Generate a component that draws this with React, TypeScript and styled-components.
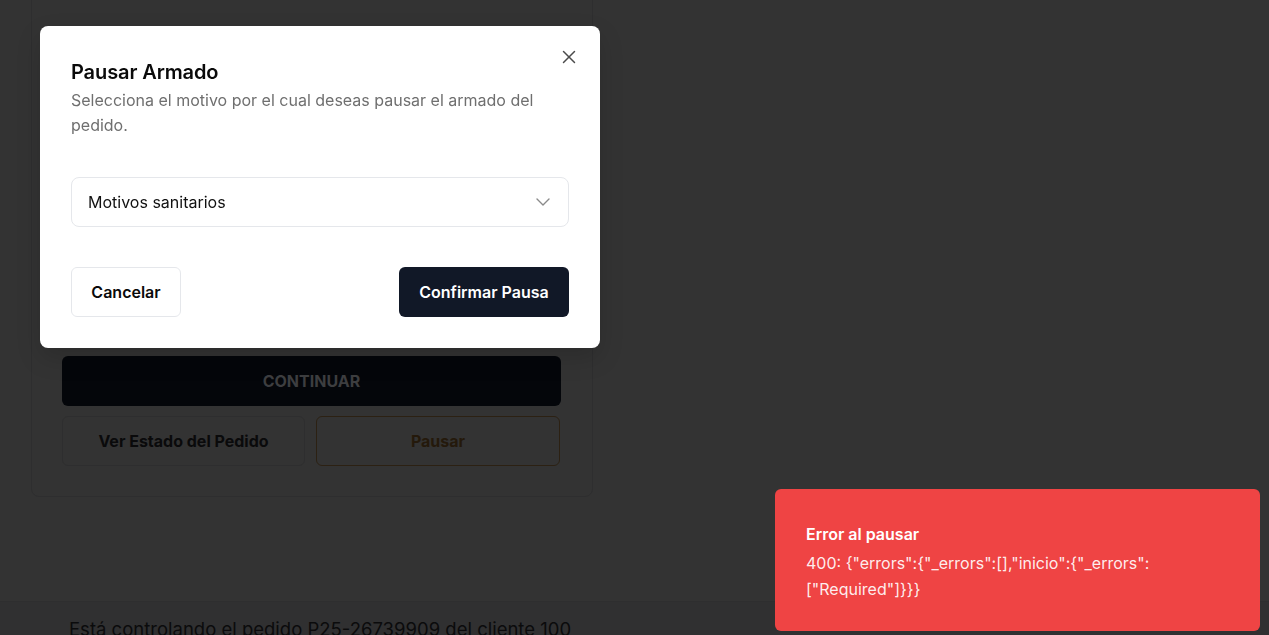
import * as React from 'react';
import styled, { createGlobalStyle } from 'styled-components';
import { X, ChevronDown } from 'lucide-react';

const GlobalStyle = createGlobalStyle`
  html, body {
    margin: 0;
    padding: 0;
    background: #333333;
    height: 100%;
    overflow: hidden;
  }
  body {
    font-family: Inter, "Noto Sans", sans-serif;
    -webkit-font-smoothing: antialiased;
  }
  * {
    box-sizing: border-box;
  }
`;

const orderNumber = 'P25-26739909';
const clientNumber = '100';

const App: React.FC = () => {
  return (
    <>
      <GlobalStyle />
      <Page>
        <Main>
          <OrderCard>
            <CardBody />
            <Actions>
              <ContinueButton disabled>CONTINUAR</ContinueButton>
              <ActionRow>
                <OutlineButton>Ver Estado del Pedido</OutlineButton>
                <PauseButton>Pausar</PauseButton>
              </ActionRow>
            </Actions>
          </OrderCard>
        </Main>
        <StatusBar>
          Está controlando el pedido {orderNumber} del cliente {clientNumber}
        </StatusBar>
      </Page>

      <Dialog role="dialog" aria-labelledby="pause-title">
        <CloseButton aria-label="Cerrar">
          <X size={22} strokeWidth={1.6} />
        </CloseButton>
        <DialogHeader>
          <DialogTitle id="pause-title">Pausar Armado</DialogTitle>
          <DialogDescription>
            Selecciona el motivo por el cual deseas pausar el armado del pedido.
          </DialogDescription>
        </DialogHeader>
        <SelectTrigger>
          <span>Motivos sanitarios</span>
          <ChevronDown size={24} strokeWidth={1.4} />
        </SelectTrigger>
        <DialogFooter>
          <SecondaryButton>Cancelar</SecondaryButton>
          <PrimaryButton>Confirmar Pausa</PrimaryButton>
        </DialogFooter>
      </Dialog>

      <Toast role="alert">
        <ToastTitle>Error al pausar</ToastTitle>
        <ToastMessage>
          400: {'{"errors":{"_errors":[],"inicio":{"_errors":'}
          <br />
          {'["Required"]}}}'}
        </ToastMessage>
      </Toast>
    </>
  );
};

const Page = styled.div`
  display: flex;
  flex-direction: column;
  height: 635px;
`;

const Main = styled.div`
  flex: 1;
  padding: 0 0 0 31px;
`;

const OrderCard = styled.div`
  width: 562px;
  margin-top: -20px;
  border: 1px solid #2e2e2f;
  border-radius: 8px;
  padding: 0 31px 30px 30px;
`;

const CardBody = styled.div`
  height: 375px;
`;

const Actions = styled.div`
  display: flex;
  flex-direction: column;
  gap: 10px;
`;

const ContinueButton = styled.button`
  height: 50px;
  width: 100%;
  border: none;
  border-radius: 6px;
  background: #04060a;
  color: #3d3e40;
  font-family: inherit;
  font-size: 16px;
  font-weight: 700;
`;

const ActionRow = styled.div`
  display: grid;
  grid-template-columns: 243px 244px;
  gap: 11px;
`;

const OutlineButton = styled.button`
  height: 50px;
  border-radius: 6px;
  background: transparent;
  font-family: inherit;
  font-size: 16px;
  font-weight: 700;
  border: 1px solid #2e2e2f;
  color: #0a0a0b;
`;

const PauseButton = styled.button`
  height: 50px;
  border-radius: 6px;
  background: transparent;
  font-family: inherit;
  font-size: 16px;
  font-weight: 700;
  border: 1px solid #2c2113;
  color: #24190b;
`;

const StatusBar = styled.div`
  height: 34px;
  background: #303031;
  border-top: 1px solid #2e2e2f;
  padding: 13px 0 0 69px;
  font-size: 18.5px;
  line-height: 28px;
  color: #0b0b0c;
  white-space: nowrap;
  overflow: hidden;
`;

const Dialog = styled.div`
  position: fixed;
  left: 40px;
  top: 26px;
  width: 560px;
  background: #ffffff;
  border-radius: 8px;
  padding: 32px 31px 31px 31px;
  display: flex;
  flex-direction: column;
  box-shadow: 0 10px 25px rgba(0, 0, 0, 0.15);
`;

const CloseButton = styled.button`
  position: absolute;
  top: 20px;
  right: 20px;
  width: 22px;
  height: 22px;
  padding: 0;
  border: none;
  background: none;
  color: #4b4b4b;
  display: flex;
`;

const DialogHeader = styled.div`
  display: flex;
  flex-direction: column;
  gap: 2px;
`;

const DialogTitle = styled.h2`
  margin: 0;
  font-size: 20px;
  line-height: 28px;
  font-weight: 600;
  color: #0a0a0a;
  letter-spacing: -0.1px;
`;

const DialogDescription = styled.p`
  margin: 0;
  font-size: 16px;
  line-height: 25px;
  color: #6f6f6f;
  padding-right: 20px;
`;

const SelectTrigger = styled.div`
  margin-top: 39px;
  height: 50px;
  border: 1px solid #e5e7eb;
  border-radius: 8px;
  display: flex;
  align-items: center;
  justify-content: space-between;
  padding: 0 13px 0 16px;
  font-size: 16px;
  color: #111111;

  svg {
    color: #8a8a8a;
  }
`;

const DialogFooter = styled.div`
  margin-top: 40px;
  display: flex;
  justify-content: space-between;
`;

const SecondaryButton = styled.button`
  height: 50px;
  width: 110px;
  padding: 0;
  border: 1px solid #e5e7eb;
  border-radius: 6px;
  background: #ffffff;
  color: #0a0a0a;
  font-family: inherit;
  font-size: 16px;
  font-weight: 600;
`;

const PrimaryButton = styled.button`
  height: 50px;
  width: 170px;
  border: none;
  border-radius: 6px;
  background: #111827;
  color: #ffffff;
  font-family: inherit;
  font-size: 16px;
  font-weight: 600;
`;

const Toast = styled.div`
  position: fixed;
  right: 9px;
  bottom: 4px;
  width: 485px;
  height: 142px;
  background: #ef4444;
  border-radius: 6px;
  padding: 33px 31px 0 31px;
  color: #ffffff;
`;

const ToastTitle = styled.div`
  font-size: 16px;
  line-height: 24px;
  font-weight: 600;
`;

const ToastMessage = styled.div`
  margin-top: 4px;
  font-size: 16px;
  line-height: 26px;
  color: rgba(255, 255, 255, 0.92);
`;

export default App;
